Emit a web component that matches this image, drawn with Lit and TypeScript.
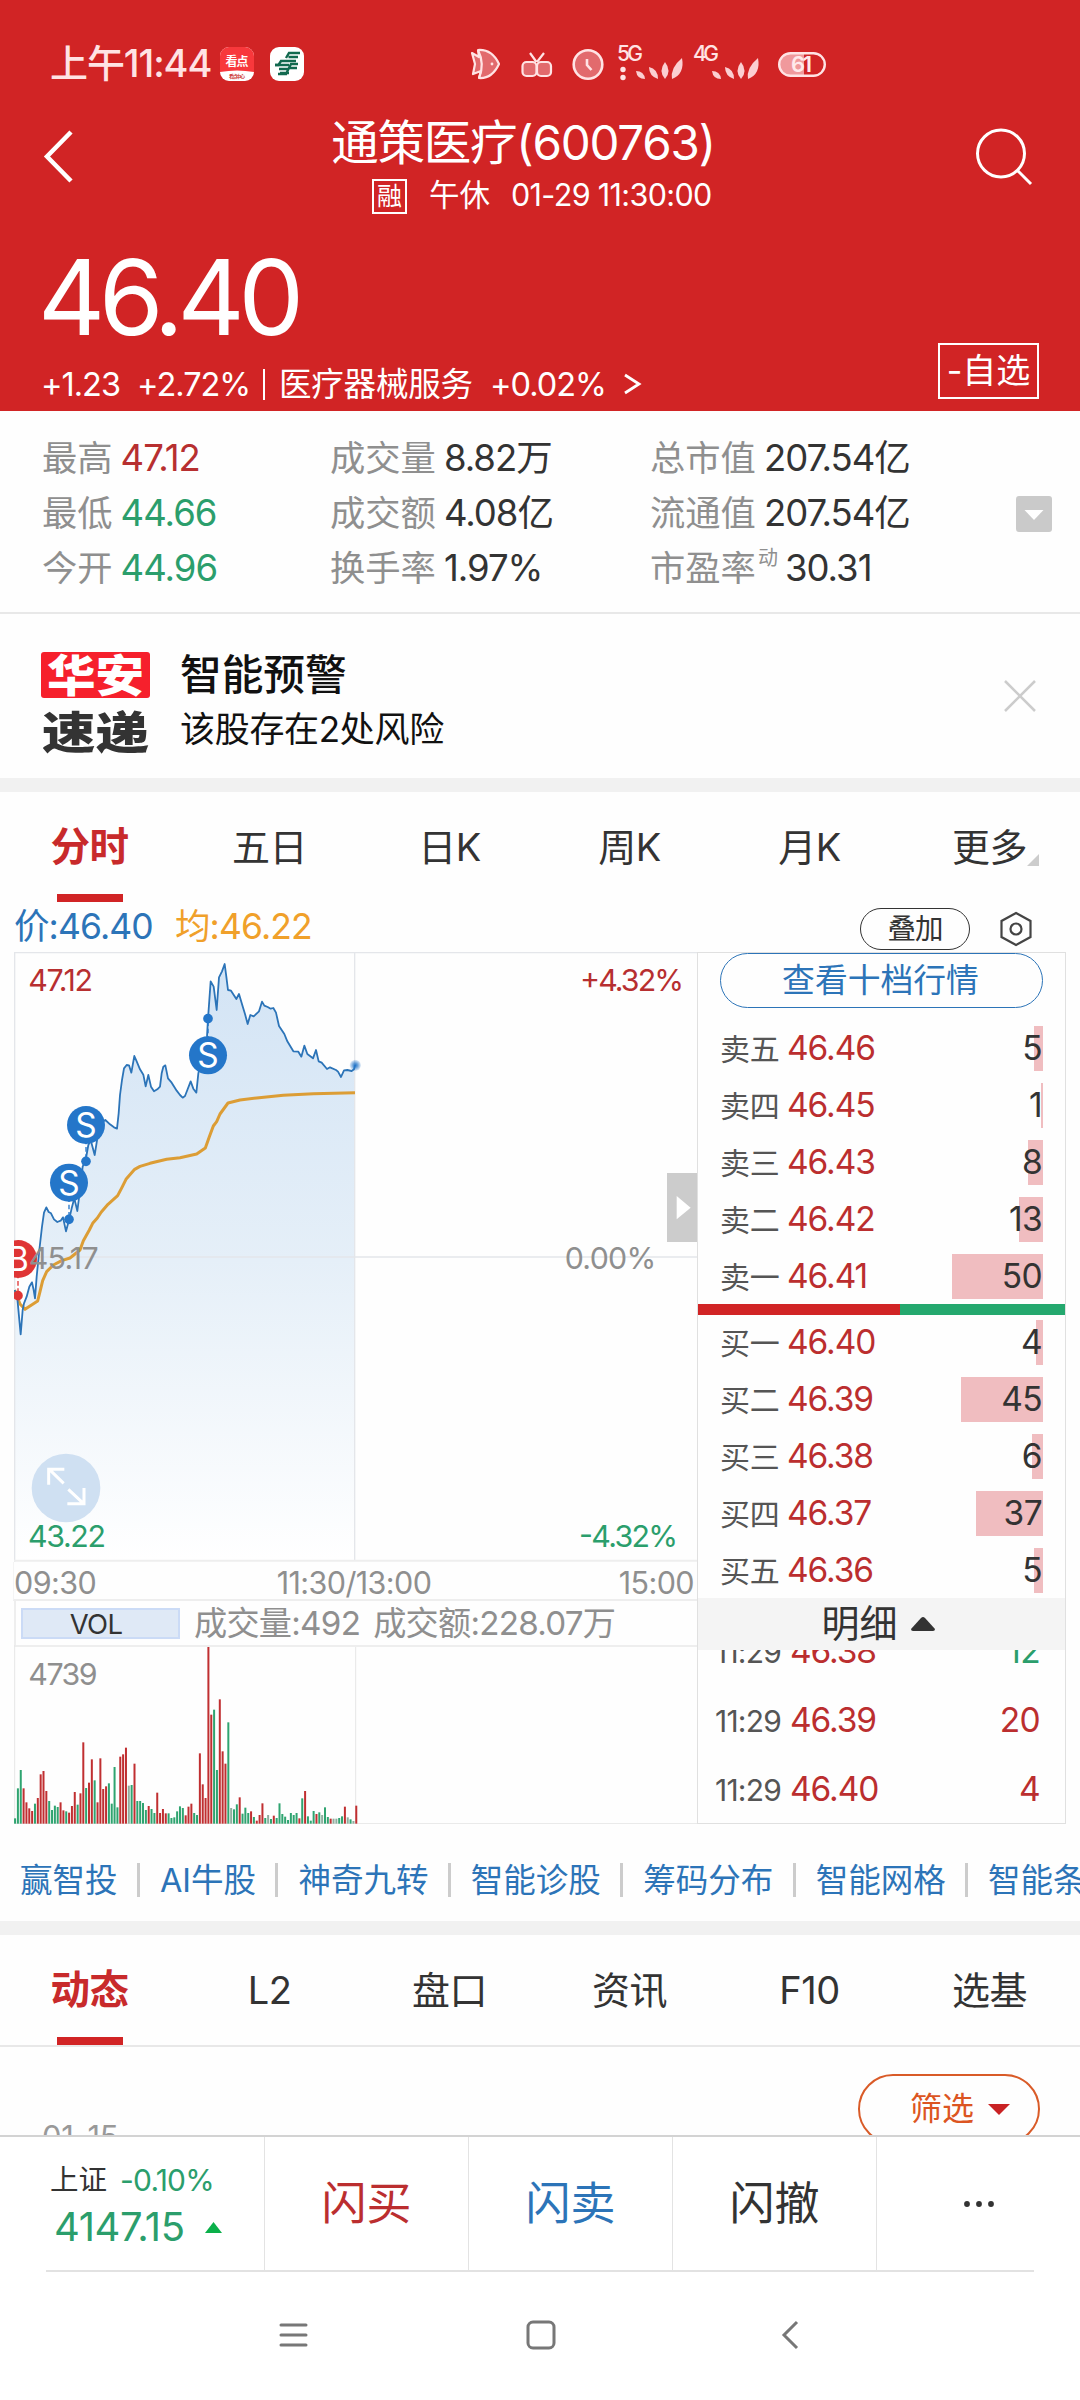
import { LitElement, html, css, svg } from "lit";
import { customElement, property } from "lit/decorators.js";
import { classMap } from "lit/directives/class-map.js";
import { styleMap } from "lit/directives/style-map.js";

const base = css`
  :host {
    display: block;
    box-sizing: border-box;
    font-family: Inter, "Noto Sans CJK SC", sans-serif;
    font-weight: 400;
    line-height: 1.2;
    color: #333;
    white-space: nowrap;
  }
  * {
    box-sizing: border-box;
  }
  svg {
    display: block;
    flex: none;
  }
`;

/* ---------- status bar ---------- */

@customElement("status-bar")
class StatusBar extends LitElement {
  static styles = [
    base,
    css`
      :host {
        height: 88px;
        padding: 40px 0 0 50px;
        color: #ffe3e4;
      }
      .bar {
        display: flex;
        align-items: center;
        height: 48px;
      }
      .time {
        width: 170px;
        font-size: 38px;
        font-weight: 500;
        letter-spacing: -1.100px;
      }
      .app {
        margin-right: 16px;
      }
      .icons {
        margin-left: 150px;
      }
    `,
  ];

  private leaves(x: number) {
    return svg`<g transform="translate(${x} 0)" fill="#fbcfd2">
      <path d="M0 31 Q8 31 9 39 Q1 39 0 31Z"/>
      <path d="M13 27 Q22 29 22 39 Q13 36 13 27Z"/>
      <path d="M29 22 Q36 31 29 39 Q22 31 29 22Z"/>
      <path d="M46 18 Q49 34 36 39 Q34 28 46 18Z"/>
    </g>`;
  }

  render() {
    return html`
      <div class="bar">
        <span class="time">上午11:44</span>
        <svg class="app" width="34" height="34" viewBox="0 0 34 34">
          <rect width="34" height="34" rx="9" fill="#fff" />
          <path d="M0 25V9a9 9 0 0 1 9-9h16a9 9 0 0 1 9 9v16q-17-3-34 0Z" fill="#f8383c" />
          <text x="5.5" y="18.5" font-size="12" font-weight="700" textLength="23" fill="#fff">看点</text>
          <text x="9" y="31" font-size="5" font-weight="700" textLength="16" fill="#c33">看点中心</text>
        </svg>
        <svg class="app" width="34" height="34" viewBox="0 0 34 34">
          <rect width="34" height="34" rx="9" fill="#fff" />
          <g fill="none" stroke="#12694f" stroke-width="2.4">
            <path d="M30 6H19l-3 5M28 10H18.500M26 14H11l-2.500 4H5" />
            <path d="M5 18h14M28 17h-7l-2 4M27 21h-8l-3 6M9 22h9M10 26h9M8 27h9" />
          </g>
        </svg>
        <svg class="icons" width="380" height="48" viewBox="0 0 380 48" fill="none" stroke="#ffe3e4" stroke-width="2.2">
          <path d="M8 10 Q22 9 29 24 Q22 39 9 38 L11 31 L3 34 L5 24 L2 13 L9 17Z" fill="#e26a6d" stroke-linejoin="round" />
          <path d="M8 10 Q15 24 9 38" />
          <circle cx="22" cy="24" r="1.400" fill="#ffe3e4" stroke="none" />
          <rect x="52.500" y="22" width="14" height="14" rx="4" fill="#e26a6d" />
          <rect x="67" y="22" width="14" height="14" rx="4" fill="#e26a6d" />
          <path d="M66.500 22 L60 13 M67 22 L74 13" />
          <circle cx="118" cy="24.500" r="14.300" fill="#e26a6d" stroke-width="2.600" />
          <path d="M117 19v6l4.500 5" stroke-width="2.600" />
          <g fill="#ffe3e4" stroke="none">
            <text x="147" y="20.500" font-size="21" font-weight="500" textLength="26">5G</text>
            <text x="223" y="20.500" font-size="21" font-weight="500" textLength="26">4G</text>
            <circle cx="153" cy="29.500" r="2.700" />
            <circle cx="153" cy="37.500" r="2.700" />
          </g>
          <g stroke="none">${this.leaves(166)}${this.leaves(242)}</g>
          <g transform="translate(308 12)">
            <path d="M26 1H12a11.500 11.500 0 0 0 0 23h14Z" fill="#f0999c" stroke="none" />
            <rect x="1.200" y="1.200" width="45.600" height="22.600" rx="11.300" stroke-width="2.400" />
            <text x="13" y="20" font-size="22" font-weight="600" fill="#ffe9ea" stroke="none" textLength="21">61</text>
          </g>
        </svg>
      </div>
    `;
  }
}

/* ---------- red quote header ---------- */

@customElement("quote-header")
class QuoteHeader extends LitElement {
  static styles = [
    base,
    css`
      :host {
        height: 411px;
        background: #d12425;
        color: #fff;
        overflow: hidden;
      }
      .nav {
        display: grid;
        grid-template-columns: 120px 1fr 120px;
        height: 146px;
      }
      .back {
        margin: 42px 0 0 42px;
      }
      .search {
        margin: 39px 0 0 14px;
      }
      .titles {
        padding-top: 25px;
      }
      .title {
        height: 60px;
        line-height: 60px;
        text-align: center;
        font-size: 47.500px;
        letter-spacing: -1.200px;
        padding-right: 34px;
      }
      .sub {
        display: flex;
        align-items: center;
        height: 44px;
        padding-left: 252px;
        font-size: 30.500px;
        line-height: 44px;
      }
      .badge {
        width: 35px;
        height: 35px;
        margin-top: 3px;
        border: 2px solid #fff;
        font-size: 25px;
        line-height: 31px;
        text-align: center;
      }
      .state {
        width: 82px;
        margin-left: 22px;
      }
      .date {
        letter-spacing: -0.65px;
      }
      .bottom {
        display: flex;
        justify-content: space-between;
        padding: 0 41px 0 41px;
      }
      .price {
        margin: 8px 0 0 -3px;
        height: 110px;
        line-height: 110px;
        font-size: 104px;
        letter-spacing: -6.200px;
      }
      .change {
        display: flex;
        align-items: center;
        margin-top: 10px;
        height: 44px;
        font-size: 32.500px;
        letter-spacing: -1px;
      }
      .delta {
        width: 96px;
      }
      .pct {
        width: 126px;
      }
      .bar {
        width: 2px;
        height: 31px;
        background: #fff;
        margin-right: 14px;
      }
      .sector {
        width: 211px;
        letter-spacing: -0.2px;
      }
      .spct {
        width: 134px;
      }
      .fav {
        align-self: flex-end;
        width: 101px;
        height: 56px;
        margin-bottom: 7px;
        border: 2px solid #fff;
        font-size: 34px;
        line-height: 52px;
        text-align: center;
      }
    `,
  ];

  render() {
    return html`
      <status-bar></status-bar>
      <div class="nav">
        <svg class="back" width="34" height="54" viewBox="0 0 34 54" fill="none" stroke="#fff" stroke-width="4.500">
          <path d="M29 2 L5 26.500 L29 51" />
        </svg>
        <div class="titles">
          <div class="title">通策医疗(600763)</div>
          <div class="sub">
            <span class="badge">融</span>
            <span class="state">午休</span>
            <span class="date">01-29 11:30:00</span>
          </div>
        </div>
        <svg class="search" width="60" height="60" viewBox="0 0 60 60" fill="none" stroke="#fff" stroke-width="3">
          <circle cx="27" cy="26.500" r="23.500" />
          <path d="M43 43 L57 57" />
        </svg>
      </div>
      <div class="bottom">
        <div>
          <div class="price">46.40</div>
          <div class="change">
            <span class="delta">+1.23</span>
            <span class="pct">+2.72%</span>
            <span class="bar"></span>
            <span class="sector">医疗器械服务</span>
            <span class="spct">+0.02%</span>
            <svg width="18" height="22" viewBox="0 0 18 22" fill="none" stroke="#fff" stroke-width="2.800">
              <path d="M1 2 L15 11 L1 20" />
            </svg>
          </div>
        </div>
        <div class="fav">-自选</div>
      </div>
    `;
  }
}

/* ---------- key statistics ---------- */

@customElement("quote-stats")
class QuoteStats extends LitElement {
  static styles = [
    base,
    css`
      :host {
        height: 203px;
        padding: 20px 28px 0 42px;
        border-bottom: 2px solid #e8e8e8;
        font-size: 35.300px;
      }
      .row {
        display: flex;
        align-items: center;
      }
      .cols {
        display: grid;
        grid-template-columns: 288px 320px 366px;
        grid-auto-rows: 55px;
        align-items: center;
      }
      .cell {
        display: flex;
        line-height: 55px;
      }
      .label {
        color: #8f8f8f;
        margin-right: 8px;
      }
      .value {
        font-size: 36.500px;
        letter-spacing: -1px;
      }
      .up {
        color: #b72f30;
      }
      .down {
        color: #2b9e6c;
      }
      .sup {
        font-size: 20px;
        line-height: 34px;
        margin-left: -6px;
        margin-right: 7px;
        color: #8f8f8f;
      }
      .more {
        border-radius: 3px;
        background: #cacaca;
      }
    `,
  ];

  private cells = [
    ["最高", "47.12", "up", ""],
    ["成交量", "8.82万", "", ""],
    ["总市值", "207.54亿", "", ""],
    ["最低", "44.66", "down", ""],
    ["成交额", "4.08亿", "", ""],
    ["流通值", "207.54亿", "", ""],
    ["今开", "44.96", "down", ""],
    ["换手率", "1.97%", "", ""],
    ["市盈率", "30.31", "", "动"],
  ];

  render() {
    return html`
      <div class="row">
        <div class="cols">
          ${this.cells.map(
            ([label, value, tone, sup]) => html`<div class="cell">
              <span class="label">${label}</span>
              ${sup ? html`<span class="sup">${sup}</span>` : ""}
              <span class=${classMap({ value: true, up: tone === "up", down: tone === "down" })}>${value}</span>
            </div>`,
          )}
        </div>
        <svg class="more" width="36" height="36" viewBox="0 0 36 36"><path d="M8.500 14h19L18 24Z" fill="#fff" /></svg>
      </div>
    `;
  }
}

/* ---------- alert card ---------- */

@customElement("alert-card")
class AlertCard extends LitElement {
  static styles = [
    base,
    css`
      :host {
        display: flex;
        height: 178px;
        padding: 38px 43px 0 41px;
        border-bottom: 14px solid #f1f1f1;
        color: #111;
      }
      .logo {
        width: 110px;
        margin-right: 29px;
      }
      .copy {
        flex: 1;
      }
      .head {
        height: 46px;
        line-height: 47px;
        font-size: 41.700px;
        font-weight: 500;
      }
      .body {
        margin-top: 9px;
        height: 46px;
        line-height: 45px;
        font-size: 35px;
        letter-spacing: -0.3px;
      }
      .close {
        margin-top: 27px;
      }
    `,
  ];

  render() {
    return html`
      <svg class="logo" width="110" height="104" viewBox="0 0 110 104" font-weight="900" font-size="49">
        <rect x="0" y="0" width="109" height="46" rx="3" fill="#f6202c" />
        <g transform="translate(6 39.500) scale(1 0.9)">
          <text textLength="97" lengthAdjust="spacingAndGlyphs" fill="#fff">华安</text>
        </g>
        <g transform="translate(1 97) scale(1 0.9)">
          <text textLength="107" lengthAdjust="spacingAndGlyphs" fill="#333">速递</text>
        </g>
      </svg>
      <div class="copy">
        <div class="head">智能预警</div>
        <div class="body">该股存在2处风险</div>
      </div>
      <svg class="close" width="34" height="34" viewBox="0 0 34 34" stroke="#ccc" stroke-width="2.500">
        <path d="M2 2 L32 32 M32 2 L2 32" />
      </svg>
    `;
  }
}

/* ---------- tab strip ---------- */

@customElement("tab-strip")
class TabStrip extends LitElement {
  static styles = [
    base,
    css`
      :host {
        height: 110px;
      }
      .tabs {
        display: grid;
        grid-template-columns: repeat(6, 1fr);
        height: 110px;
      }
      .tab {
        display: flex;
        flex-direction: column;
        align-items: center;
        font-size: 38px;
        letter-spacing: -0.5px;
      }
      .label {
        display: flex;
        flex: none;
        height: 102px;
        line-height: 111px;
        margin-right: 1px;
      }
      .on {
        color: #c82a2b;
        font-weight: 700;
        font-size: 39.500px;
      }
      .line {
        flex: none;
        width: 66px;
        height: 8px;
        background: #d12425;
      }
      .corner {
        margin: 62px -12px 0 0;
      }
    `,
  ];

  @property({ attribute: false }) labels: string[] = [];
  @property({ type: Boolean }) corner = false;

  render() {
    const last = this.labels.length - 1;
    return html`<div class="tabs">
      ${this.labels.map(
        (t, i) => html`<div class=${classMap({ tab: true, on: i === 0 })}>
          <span class="label">
            ${t}
            ${this.corner && i === last
              ? html`<svg class="corner" width="12" height="12" viewBox="0 0 12 12"><path d="M12 0V12H0Z" fill="#ccc" /></svg>`
              : ""}
          </span>
          ${i === 0 ? html`<i class="line"></i>` : ""}
        </div>`,
      )}
    </div>`;
  }
}

/* ---------- price and volume charts ---------- */

const PRICE =
  "44,1050 52,1075 62,1183 68,1110 72,1090 80,1070 88,1040 96,1027 101,1050 105,1075 110,1010 118,930 126,860 132,818 139,802 146,816 153,820 162,838 172,846 182,842 189,832 198,874 207,840 215,805 223,775 232,813 240,750 248,680 257,660 265,615 272,600 284,645 292,595 305,545 316,540 330,553 342,562 351,566 356,520 360,465 366,420 372,385 380,375 387,376 394,398 403,348 410,364 420,388 430,404 437,439 445,405 453,440 462,454 472,448 480,440 485,400 490,380 496,376 504,415 515,428 530,452 540,465 548,473 555,468 562,450 572,424 580,446 589,458 595,400 602,370 612,330 621,290 624,236 628,180 632,124 641,140 650,210 657,112 666,94 674,72 679,110 684,150 693,152 709,177 717,162 727,196 735,222 743,252 751,225 761,229 777,214 786,185 793,197 803,201 812,206 820,204 828,218 837,258 853,282 862,304 880,334 895,335 904,350 913,317 922,342 939,355 948,330 956,364 965,368 981,387 990,382 1008,390 1014,395 1023,411 1032,391 1042,390 1055,393 1062,388 1065,376";

const AVERAGE =
  "44,1050 60,1092 75,1108 113,1083 120,1055 128,1022 140,995 160,975 185,962 210,954 240,930 250,902 268,870 278,850 292,834 304,816 324,793 353,767 366,742 378,718 404,688 420,679 450,670 500,658 540,653 590,642 616,624 628,590 640,558 650,545 660,522 684,489 720,480 770,474 850,466 940,461 1065,458";

/* one entry per minute: bar top, then direction (r up, g down, n flat) */
const VOLUME =
  "562g 472g 417g 472r 514r 532r 540r 518g 501r 430r 420r 480r 510g 537g 524g 528g 514r 538r 541g 545r 525r 483r 521g 487r 334r 471g 455r 385r 448g 514r 382r 474r 466r 457g 518g 408g 529g 377r 370r 350r 464n 462g 398r 510g 510g 516g 537g 525r 534g 546g 485r 546r 534r 547r 547g 561g 559g 541g 526g 531g 553r 527r 518r 546g 552g 367r 460r 501r 48r 251r 236g 417g 205r 361r 398r 274g 531n 535g 520g 499r 548g 530g 546g 541r 558g 569r 552r 517r 561g 552n 564g 554r 561g 517g 549g 557g 567g 546g 552g 546g 562r 502g 480r 556g 569g 540g 549r 544g 552n 529g 558g 563r 563n 563n 561g 556g 527r 559n 565g 570n 524r".split(
    " ",
  );

const TONE: Record<string, string> = { r: "#c02f31", g: "#2fa470", n: "#8fae9f" };

@customElement("trend-chart")
class TrendChart extends LitElement {
  static styles = [
    base,
    css`
      :host {
        width: 697px;
        height: 872px;
      }
      .axis {
        display: flex;
        justify-content: space-between;
        align-items: center;
        height: 39px;
        margin-left: 13px;
        padding: 5px 3px 0 0;
        border-bottom: 2px solid #eee;
        border-left: 1px solid #f4f4f4;
        font-size: 30.500px;
        letter-spacing: -0.6px;
        color: #8f8f8f;
      }
      .end {
        width: 84px;
      }
      .right {
        text-align: right;
      }
      .vol {
        display: flex;
        align-items: center;
        height: 44px;
        margin-left: 14px;
        padding: 1px 0 0 5px;
        border-left: 2px solid #eee;
        font-size: 33.200px;
        letter-spacing: -0.75px;
        color: #8f8f8f;
      }
      .tag {
        width: 159px;
        height: 31px;
        margin-right: 14px;
        border: 2px solid #cbdbf6;
        background: #dfe9f6;
        color: #333;
        font-size: 27.500px;
        line-height: 28px;
        padding-right: 9px;
        text-align: center;
      }
      .amount {
        margin-left: 13px;
      }
    `,
  ];

  private marker(x: number, y: number, dotY: number, letter: string, color: string) {
    return svg`
      <line x1=${x} x2=${x} y1=${y} y2=${dotY} stroke=${color} stroke-width="4" stroke-dasharray="14 8"/>
      <circle cx=${x} cy=${dotY} r="14.500" fill=${color}/>
      <circle cx=${x} cy=${y} r="57" fill=${color}/>
      <text x=${x} y=${y + 36} font-size="100" text-anchor="middle" fill="#fff">${letter}</text>`;
  }

  render() {
    return html`
      <svg width="697" height="610" viewBox="0 36 2091 1830">
        <defs>
          <linearGradient id="fill" gradientUnits="userSpaceOnUse" x1="0" y1="60" x2="0" y2="1862">
            <stop offset="0" stop-color="#d3e4f5" />
            <stop offset="0.5" stop-color="#e5eff8" />
            <stop offset="1" stop-color="#ffffff" />
          </linearGradient>
          <radialGradient id="pulse">
            <stop offset="0" stop-color="#2476c9" />
            <stop offset="0.4" stop-color="#2476c9" stop-opacity="0.7" />
            <stop offset="1" stop-color="#2476c9" stop-opacity="0.1" />
          </radialGradient>
          <clipPath id="plot"><rect x="42" y="36" width="2050" height="1830" /></clipPath>
        </defs>
        <polygon points="44,1862 ${PRICE} 1065,1862" fill="url(#fill)" />
        <g stroke="#e4e6ea" stroke-width="4" fill="none">
          <path d="M42 38H2091M44 38V1866M1064 38V1862M44 951H2091" />
          <path d="M42 1862H2091" stroke="#eee" stroke-width="6" />
        </g>
        <g clip-path="url(#plot)">
          <polyline points=${AVERAGE} fill="none" stroke="#dc9d35" stroke-width="9" stroke-linejoin="round" />
          <polyline points=${PRICE} fill="none" stroke="#2c74b8" stroke-width="5.400" stroke-linejoin="round" />
          ${this.marker(54, 957, 1067, "B", "#df3535")}
          ${this.marker(207, 728, 838, "S", "#2476c9")}
          ${this.marker(258, 555, 664, "S", "#2476c9")}
          ${this.marker(624, 346, 236, "S", "#2476c9")}
        </g>
        <circle cx="1066" cy="376" r="17" fill="url(#pulse)" />
        <g font-size="91">
          <text x="85" y="153" textLength="194" fill="#b72f30">47.12</text>
          <text x="1740" y="153" textLength="312" fill="#b72f30">+4.32%</text>
          <text x="86" y="987" textLength="210" fill="#8f8f8f">45.17</text>
          <text x="1694" y="987" textLength="275" fill="#8f8f8f">0.00%</text>
        </g>
        <g transform="translate(198 1644)">
          <circle r="103" fill="#cfe0f2" />
          <g fill="none" stroke="#fff" stroke-width="9">
            <path d="M-7 -14 L-50 -56 M-52 -10V-56H-5" />
            <path d="M7 4 L52 46 M54 0V47H4" />
          </g>
        </g>
        <g font-size="91" fill="#2b9e6c">
          <text x="84" y="1821" textLength="234">43.22</text>
          <text x="1737" y="1821" textLength="297">-4.32%</text>
        </g>
        <rect x="2001" y="699" width="90" height="207" fill="#ccc" />
        <path d="M2030 768V838L2072 803Z" fill="#fff" />
      </svg>
      <div class="axis">
        <span class="end">09:30</span>
        <span>11:30/13:00</span>
        <span class="end right">15:00</span>
      </div>
      <div class="vol">
        <span class="tag">VOL</span>
        <span>成交量:492</span>
        <span class="amount">成交额:228.07万</span>
      </div>
      <svg width="697" height="179" viewBox="0 42 2091 537">
        <path d="M42 45H2091" stroke="#eee" stroke-width="6" />
        <path d="M44 42V579M1067 48V579M44 578H2091" stroke="#e6e6e6" stroke-width="3" fill="none" />
        ${VOLUME.map((v, i) => {
          const top = parseInt(v, 10);
          return svg`<rect x=${(42.2 + i * 8.53).toFixed(1)} y=${top} width="6" height=${578 - top} fill=${TONE[v.slice(-1)]}/>`;
        })}
        <text x="85" y="161" font-size="91" textLength="208" fill="#8f8f8f">4739</text>
      </svg>
    `;
  }
}

/* ---------- order book ---------- */

type Level = [string, string, number];

@customElement("order-book")
class OrderBook extends LitElement {
  static styles = [
    base,
    css`
      :host {
        width: 369px;
        height: 872px;
        border: 1px solid #e0e0e0;
        overflow: hidden;
      }
      .ten {
        width: 323px;
        height: 55px;
        margin: 0 0 12px 22px;
        border: 1.500px solid #2c74b8;
        border-radius: 28px;
        color: #2c74b8;
        font-size: 32.800px;
        line-height: 53px;
        padding-right: 2px;
        text-align: center;
      }
      .level {
        display: flex;
        align-items: center;
        height: 57px;
        padding: 0 22px;
      }
      .name {
        width: 67px;
        font-size: 30px;
        letter-spacing: -0.3px;
        color: #555;
      }
      .price {
        flex: 1;
        font-size: 33.500px;
        letter-spacing: -1.100px;
        color: #bb2e2f;
      }
      .qty {
        display: grid;
        justify-items: end;
        align-items: center;
      }
      .bar {
        grid-area: 1 / 1;
        height: 45px;
        background: #f0bdc0;
      }
      .num {
        grid-area: 1 / 1;
        padding-right: 1px;
        font-size: 33.500px;
        letter-spacing: -0.6px;
      }
      .ratio {
        display: flex;
        height: 11px;
        margin: -1px 0;
      }
      .sell {
        width: 202px;
        background: #d12425;
      }
      .buy {
        flex: 1;
        background: #24a86e;
      }
      .bids {
        height: 284px;
      }
      .head {
        display: flex;
        align-items: center;
        justify-content: center;
        gap: 13px;
        height: 52px;
        padding-right: 7px;
        background: #f4f4f4;
        font-size: 38px;
      }
      .ticks {
        height: 173px;
        overflow: hidden;
      }
      .tick {
        display: flex;
        align-items: center;
        height: 69px;
        padding: 0 25px 0 17px;
      }
      .tick:first-child {
        margin-top: -33px;
      }
      .time {
        width: 75px;
        font-size: 30px;
        letter-spacing: -0.8px;
        color: #555;
      }
      .vol {
        font-size: 33.500px;
        color: #bb2e2f;
        letter-spacing: -0.6px;
      }
      .green {
        color: #2b9e6c;
      }
    `,
  ];

  private asks: Level[] = [
    ["卖五", "46.46", 5],
    ["卖四", "46.45", 1],
    ["卖三", "46.43", 8],
    ["卖二", "46.42", 13],
    ["卖一", "46.41", 50],
  ];
  private bids: Level[] = [
    ["买一", "46.40", 4],
    ["买二", "46.39", 45],
    ["买三", "46.38", 6],
    ["买四", "46.37", 37],
    ["买五", "46.36", 5],
  ];
  private ticks: [string, string, string, boolean][] = [
    ["11:29", "46.38", "12", true],
    ["11:29", "46.39", "20", false],
    ["11:29", "46.40", "4", false],
  ];

  private level([name, price, qty]: Level) {
    return html`<div class="level">
      <span class="name">${name}</span>
      <span class="price">${price}</span>
      <span class="qty">
        <i class="bar" style=${styleMap({ width: `${Math.max(2, Math.round(qty * 1.82))}px` })}></i>
        <span class="num">${qty}</span>
      </span>
    </div>`;
  }

  render() {
    return html`
      <div class="ten">查看十档行情</div>
      <div>${this.asks.map((l) => this.level(l))}</div>
      <div class="ratio"><i class="sell"></i><i class="buy"></i></div>
      <div class="bids">${this.bids.map((l) => this.level(l))}</div>
      <div class="head">
        明细
        <svg width="24" height="14" viewBox="0 0 24 14"><path d="M10 1 Q12 -1 14 1 L24 12 Q24 14 22 14H2 Q0 14 0 12Z" fill="#333" /></svg>
      </div>
      <div class="ticks">
        ${this.ticks.map(
          ([t, p, v, sell]) => html`<div class="tick">
            <span class="time">${t}</span><span class="price">${p}</span>
            <span class=${classMap({ vol: true, green: sell })}>${v}</span>
          </div>`,
        )}
      </div>
    `;
  }
}

/* ---------- bottom bars ---------- */

@customElement("trade-bar")
class TradeBar extends LitElement {
  static styles = [
    base,
    css`
      :host {
        height: 265px;
        border-top: 2px solid #d3d3d3;
        background: #fff;
      }
      .cells {
        display: grid;
        grid-template-columns: 265px repeat(4, 204px);
        height: 133px;
      }
      .cell {
        display: flex;
        align-items: center;
        justify-content: center;
        border-right: 1.500px solid #e3e3e3;
        font-size: 45px;
      }
      .cell:last-child {
        border: none;
      }
      .rule {
        height: 2px;
        margin: 0 46px;
        background: #e2e2e2;
      }
      .index {
        border-right: 1.500px solid #e3e3e3;
        padding: 21px 0 0 50px;
      }
      .line {
        display: flex;
        align-items: center;
        height: 44px;
        font-size: 28.500px;
      }
      .pct {
        margin-left: 13px;
        font-size: 30px;
        letter-spacing: -0.8px;
        color: #2b9e6c;
      }
      .big {
        height: 50px;
        padding-left: 4px;
        gap: 20px;
        font-size: 40px;
        letter-spacing: -0.4px;
        color: #2b9e6c;
      }
      .red {
        color: #bb2e2f;
      }
      .blue {
        color: #2c74b8;
      }
      .nav {
        display: flex;
        padding: 48px 0 0 279px;
      }
      .home {
        margin-left: 218px;
      }
      .back {
        margin-left: 221px;
      }
    `,
  ];

  render() {
    return html`
      <div class="cells">
        <div class="index">
          <div class="line">上证<span class="pct">-0.10%</span></div>
          <div class="line big">
            4147.15
            <svg width="17" height="11" viewBox="0 0 17 11"><path d="M8.500 0L17 11H0Z" fill="#0bb04a" /></svg>
          </div>
        </div>
        <div class="cell red">闪买</div>
        <div class="cell blue">闪卖</div>
        <div class="cell">闪撤</div>
        <div class="cell">
          <svg width="32" height="8" viewBox="0 0 32 8" fill="#333">
            <circle cx="4" cy="4" r="2.900" /><circle cx="16" cy="4" r="2.900" /><circle cx="28" cy="4" r="2.900" />
          </svg>
        </div>
      </div>
      <div class="rule"></div>
      <div class="nav">
        <svg width="29" height="30" viewBox="0 0 29 30" stroke="#777" stroke-width="3" stroke-linecap="round">
          <path d="M2 5H27M2 15H27M2 25H27" />
        </svg>
        <svg class="home" width="30" height="30" viewBox="0 0 30 30" fill="none" stroke="#777" stroke-width="3">
          <rect x="2" y="2" width="26" height="26" rx="5" />
        </svg>
        <svg class="back" width="24" height="30" viewBox="0 0 24 30" fill="none" stroke="#777" stroke-width="3">
          <path d="M20 2L7 15L20 28" />
        </svg>
      </div>
    `;
  }
}

/* ---------- page ---------- */

@customElement("app-root")
class AppRoot extends LitElement {
  static styles = [
    base,
    css`
      :host {
        display: flex;
        flex-direction: column;
        width: 1080px;
        height: 2400px;
        background: #fefefe;
        overflow: hidden;
      }
      .legend {
        display: flex;
        align-items: center;
        height: 50px;
        padding-left: 14px;
        font-size: 35.500px;
        letter-spacing: -0.9px;
      }
      .last {
        width: 161px;
        color: #2c74b8;
      }
      .avg {
        flex: 1;
        color: #f0a02a;
      }
      .overlay {
        width: 110px;
        height: 42px;
        margin: 3px 29px 0 0;
        border: 1.500px solid #333;
        border-radius: 21px;
        font-size: 28.500px;
        line-height: 40px;
        text-align: center;
      }
      .gear {
        margin: 3px 47px 0 0;
      }
      .charts {
        display: flex;
        height: 872px;
      }
      .links {
        display: flex;
        align-items: center;
        height: 97px;
        padding: 15px 0 0 20px;
        font-size: 32.500px;
        color: #2c74b8;
        overflow: hidden;
      }
      .link {
        flex: none;
        display: flex;
        align-items: center;
      }
      .link + .link::before {
        content: "";
        width: 3px;
        height: 34px;
        margin: 0 20px 0 19.400px;
        background: #ccc;
      }
      .band {
        height: 14px;
        background: #f1f1f1;
      }
      .feed {
        display: flex;
        justify-content: space-between;
        flex: 1;
        min-height: 0;
        border-top: 2px solid #e8e8e8;
        padding: 27px 40px 0 42px;
        overflow: hidden;
      }
      .date {
        margin-top: 43px;
        height: 40px;
        line-height: 40px;
        font-size: 31px;
        letter-spacing: -0.3px;
        color: #999;
      }
      .filter {
        display: flex;
        align-items: center;
        justify-content: flex-end;
        gap: 14px;
        width: 182px;
        height: 70px;
        padding-right: 28px;
        border: 2.500px solid #d95b28;
        border-radius: 35px;
        font-size: 32px;
        color: #dc5522;
      }
    `,
  ];

  private links = ["赢智投", "AI牛股", "神奇九转", "智能诊股", "筹码分布", "智能网格", "智能条件单"];

  render() {
    return html`
      <quote-header></quote-header>
      <quote-stats></quote-stats>
      <alert-card></alert-card>
      <tab-strip corner .labels=${["分时", "五日", "日K", "周K", "月K", "更多"]}></tab-strip>
      <div class="legend">
        <span class="last">价:46.40</span>
        <span class="avg">均:46.22</span>
        <span class="overlay">叠加</span>
        <svg class="gear" width="34" height="36" viewBox="0 0 34 36" fill="none" stroke="#444" stroke-width="2.200">
          <path d="M17 2L31.500 10V26L17 34L2.500 26V10Z" />
          <circle cx="17" cy="18" r="5.500" />
        </svg>
      </div>
      <div class="charts">
        <trend-chart></trend-chart>
        <order-book></order-book>
      </div>
      <div class="links">${this.links.map((l) => html`<span class="link">${l}</span>`)}</div>
      <div class="band"></div>
      <tab-strip .labels=${["动态", "L2", "盘口", "资讯", "F10", "选基"]}></tab-strip>
      <div class="feed">
        <div class="date">01-15</div>
        <div class="filter">
          筛选
          <svg width="22" height="11" viewBox="0 0 22 11"><path d="M0 0H22L11 11Z" fill="#c92224" /></svg>
        </div>
      </div>
      <trade-bar></trade-bar>
    `;
  }
}
